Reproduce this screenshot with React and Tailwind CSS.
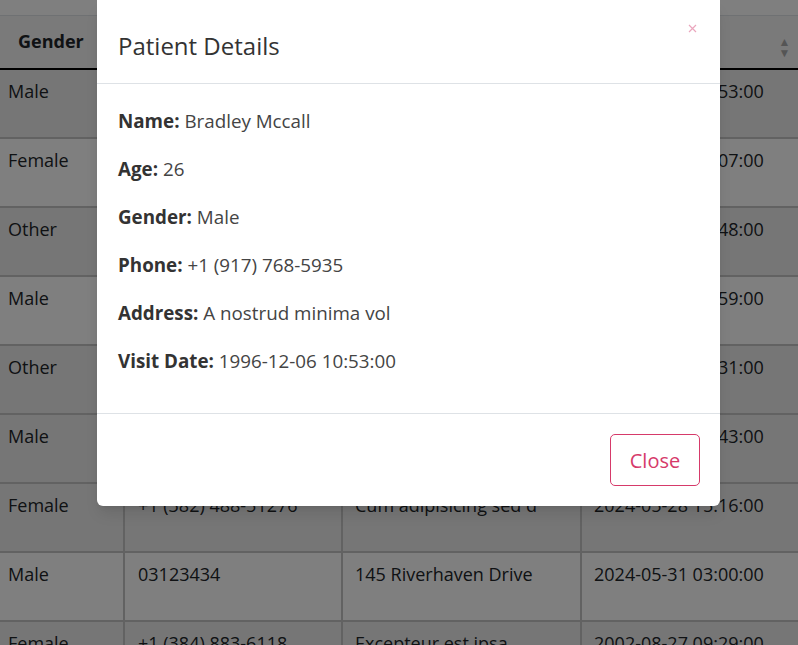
import React from "react";

const rows = [
  { gender: "Male", phone: "+1 (917) 768-5935", address: "A nostrud minima vol", date: "1996-12-06 10:53:00" },
  { gender: "Female", phone: "+1 (214) 563-1907", address: "Aut esse fugiat duis", date: "2011-04-19 22:07:00" },
  { gender: "Other", phone: "+1 (605) 372-8841", address: "Quis ut voluptas ea", date: "1987-09-02 06:48:00" },
  { gender: "Male", phone: "+1 (463) 915-2287", address: "Ipsum dolor elit", date: "2019-01-14 17:59:00" },
  { gender: "Other", phone: "+1 (728) 154-6603", address: "Velit molestiae sint", date: "2005-07-23 08:31:00" },
  { gender: "Male", phone: "+1 (352) 640-7719", address: "Nisi officia labore", date: "1999-11-30 12:43:00" },
  { gender: "Female", phone: "+1 (382) 488-51276", address: "Cum adipisicing sed d", date: "2024-05-28 15:16:00" },
  { gender: "Male", phone: "03123434", address: "145 Riverhaven Drive", date: "2024-05-31 03:00:00" },
  { gender: "Female", phone: "+1 (384) 883-6118", address: "Excepteur est ipsa", date: "2002-08-27 09:29:00" },
];

const PatientTable = () => (
  <div className="pt-[15px]">
    <table className="w-[830px] border-collapse text-[18px] text-[#212529]">
      <thead>
        <tr className="h-[53px] border-t border-[#dee2e6] border-b-2 border-b-black bg-[#f4f4f4]">
          <th className="w-[124px] px-[18px] text-left font-bold">Gender</th>
          <th className="w-[218px] border-l border-[#dee2e6]"></th>
          <th className="w-[239px] border-l border-[#dee2e6]"></th>
          <th className="border-l border-[#dee2e6] text-left align-middle">
            <span className="ml-[197px] inline-flex flex-col text-[12px] leading-[11px] text-[#aaa]">
              <span>▲</span>
              <span>▼</span>
            </span>
          </th>
        </tr>
      </thead>
      <tbody>
        {rows.map((r, i) => (
          <tr
            key={i}
            className={`h-[69px] border-b-2 border-[#c4c4c4] ${
              i % 2 === 0 || i === 5 ? "bg-[#ededed]" : "bg-white"
            }`}
          >
            <td className="pl-[8px] pt-[8px] align-top">{r.gender}</td>
            <td className="border-l-2 border-[#c4c4c4] pl-[13px] pt-[8px] align-top">{r.phone}</td>
            <td className="border-l-2 border-[#c4c4c4] pl-[12px] pt-[8px] align-top">{r.address}</td>
            <td className="border-l-2 border-[#c4c4c4] pl-[12px] pt-[8px] align-top">{r.date}</td>
          </tr>
        ))}
      </tbody>
    </table>
  </div>
);

const Field = ({ label, value }) => (
  <p className="mb-4 leading-8">
    <span className="font-bold text-[#333]">{label}:</span> <span className="text-[#444]">{value}</span>
  </p>
);

const PatientModal = () => (
  <div className="absolute left-[97px] top-0 w-[623px] rounded-b-[6px] bg-white shadow-lg">
    {/* Header */}
    <div className="relative flex h-[84px] items-center border-b border-[#dee2e6] px-[21px] pt-2">
      <h2 className="text-[24px] font-normal text-[#333]">Patient Details</h2>
      <button className="absolute right-[22px] top-[22px] flex h-3 w-3 items-center justify-center">
        <svg width="9" height="9" viewBox="0 0 9 9">
          <path d="M1 1L8 8M8 1L1 8" stroke="#eaa6bd" strokeWidth="1.2" />
        </svg>
      </button>
    </div>

    {/* Body */}
    <div className="px-[21px] pt-[21px] pb-[20px] text-[18.8px]">
      <Field label="Name" value="Bradley Mccall" />
      <Field label="Age" value="26" />
      <Field label="Gender" value="Male" />
      <Field label="Phone" value="+1 (917) 768-5935" />
      <Field label="Address" value="A nostrud minima vol" />
      <Field label="Visit Date" value="1996-12-06 10:53:00" />
    </div>

    {/* Footer */}
    <div className="flex justify-end border-t border-[#dee2e6] px-[20px] py-[20px]">
      <button className="h-[52px] w-[90px] rounded-[5px] border border-[#d63a6a] pt-px text-[20px] text-[#d63a6a]">
        Close
      </button>
    </div>
  </div>
);

export default function App() {
  return (
    <div
      className="relative h-[645px] w-[798px] overflow-hidden bg-white"
      style={{ fontFamily: '"Open Sans", "Noto Sans", sans-serif' }}
    >
      <PatientTable />
      {/* Backdrop */}
      <div className="absolute inset-0 bg-black/50"></div>
      <PatientModal />
    </div>
  );
}
